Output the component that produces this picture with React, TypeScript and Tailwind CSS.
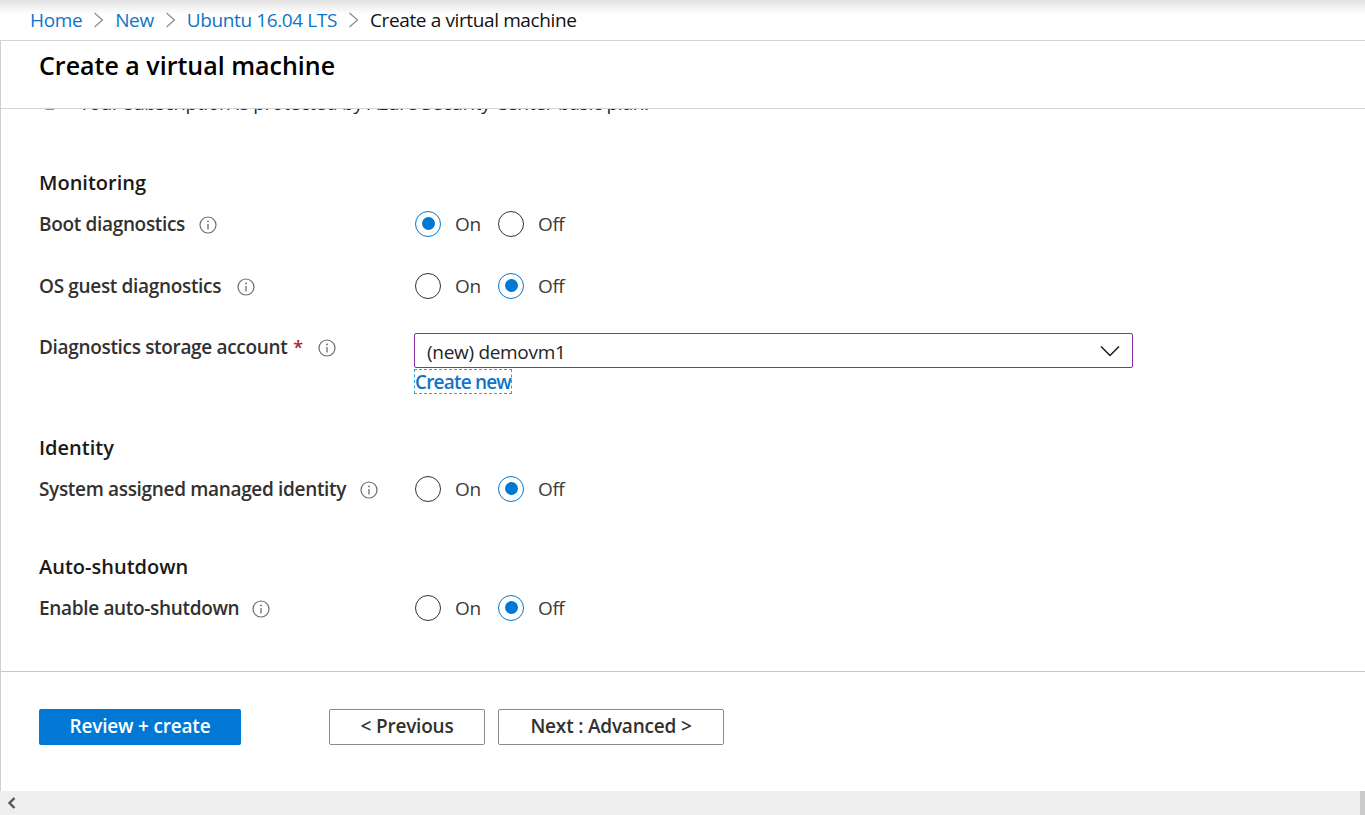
import React from 'react';

const font = "font-['Open_Sans',sans-serif]";

const Chevron = () => (
  <svg width="13" height="18" viewBox="0 0 13 18" fill="none" className="mx-[10px] shrink-0">
    <path d="M2.5 2l8 7-8 7" stroke="#8a8a8a" strokeWidth="1.2" />
  </svg>
);

const Info = () => (
  <svg width="18" height="18" viewBox="0 0 18 18" fill="none" className="shrink-0">
    <circle cx="9" cy="9" r="8" stroke="#6b6b6b" strokeWidth="1.2" />
    <path d="M9 8v5.5" stroke="#6b6b6b" strokeWidth="1.3" />
    <circle cx="9" cy="5.4" r="0.9" fill="#6b6b6b" />
  </svg>
);

const Radio = ({ checked, label }: { checked: boolean; label: string }) => (
  <div className="flex items-center">
    <div
      className={`mb-[2px] flex h-[26px] w-[26px] items-center justify-center rounded-full border ${
        checked ? 'border-[#0078d4]' : 'border-[#333333]'
      }`}
    >
      {checked && <div className="h-[13px] w-[13px] rounded-full bg-[#0078d4]" />}
    </div>
    <span className="ml-[14px] text-[19px] tracking-[-0.4px] text-[#3b3b3b]">{label}</span>
  </div>
);

const Toggle = ({ on }: { on: boolean }) => (
  <div className="flex gap-[17px]">
    <div className="w-[66px]">
      <Radio checked={on} label="On" />
    </div>
    <Radio checked={!on} label="Off" />
  </div>
);

const Row = ({ label, infoGap, on }: { label: string; infoGap: string; on: boolean }) => (
  <div className="flex h-[27px] items-center">
    <div className="flex w-[376px] items-center">
      <span className={`text-[19px] font-semibold tracking-[-0.33px] text-[#323130] ${infoGap}`}>{label}</span>
      <Info />
    </div>
    <Toggle on={on} />
  </div>
);

const Heading = ({ children }: { children: string }) => (
  <h2 className="text-[20px] leading-[26px] font-semibold text-[#1a1a1a]">{children}</h2>
);

export default function App() {
  return (
    <div className={`flex h-[815px] w-[1365px] flex-col overflow-hidden bg-white ${font}`}>
      {/* breadcrumb */}
      <div className="flex h-[41px] shrink-0 items-center border-b border-[#d4d4d4] bg-gradient-to-b from-[#e2e2e2] via-white via-35% to-white pl-[30px] text-[19px] tracking-[-0.38px]">
        <a className="text-[#0f74c8]">Home</a>
        <Chevron />
        <a className="text-[#0f74c8]">New</a>
        <Chevron />
        <a className="text-[#0f74c8]">Ubuntu 16.04 LTS</a>
        <Chevron />
        <span className="text-[#111111]">Create a virtual machine</span>
      </div>

      <div className="flex min-h-0 flex-1 flex-col border-l border-[#cfcfcf]">
        {/* blade title */}
        <div className="flex h-[68px] shrink-0 items-start border-b border-[#d4d4d4] pt-[6px] pl-[38px]">
          <h1 className="text-[25px] leading-[36px] font-semibold text-black">Create a virtual machine</h1>
        </div>

        {/* scrolled content, top row is cut by the title */}
        <div className="h-[563px] shrink-0 overflow-hidden border-b border-[#c8c8c8] pl-[38px]">
          <div className="-mt-[18px] flex h-[24px] items-center">
            <div className="ml-[6px] h-[14px] w-[10px] rounded-b-[2px] bg-[#6bb700]" />
            <span className="ml-[24px] text-[19px] tracking-[-0.25px] whitespace-nowrap text-[#252525]">
              Your subscription is protected by Azure Security Center basic plan.
            </span>
          </div>

          <div className="mt-[55px]">
            <Heading>Monitoring</Heading>
          </div>
          <div className="mt-[15px]">
            <Row label="Boot diagnostics" infoGap="mr-[14px]" on />
          </div>
          <div className="mt-[35px]">
            <Row label="OS guest diagnostics" infoGap="mr-[16px]" on={false} />
          </div>
          <div className="mt-[33px] flex">
            <div className="flex h-[27px] w-[375px] items-center pt-[2px]">
              <span className="text-[19px] font-semibold tracking-[-0.33px] text-[#323130]">Diagnostics storage account</span>
              <span className="ml-[6px] text-[18px] font-semibold text-[#a4262c]">*</span>
              <span className="ml-[15px]">
                <Info />
              </span>
            </div>
            <div className="w-[719px]">
              <div className="flex h-[35px] items-center justify-between rounded-[2px] border border-[#8a2da5] pr-[12px] pl-[12px]">
                <span className="pt-[3px] text-[19px] tracking-[-0.3px] text-[#252525]">(new) demovm1</span>
                <svg width="20" height="12" viewBox="0 0 20 12" fill="none">
                  <path d="M1 1.5l9 9 9-9" stroke="#1a1a1a" strokeWidth="1.5" />
                </svg>
              </div>
              <a className="mt-[1px] flex h-[25px] w-[98px] items-center justify-center border border-dashed border-[#2aa8dc] pt-[2px] text-[19px] font-semibold tracking-[-0.8px] whitespace-nowrap text-[#0f74c8]">
                Create new
              </a>
            </div>
          </div>

          <div className="mt-[41px]">
            <Heading>Identity</Heading>
          </div>
          <div className="mt-[15px]">
            <Row label="System assigned managed identity" infoGap="mr-[14px]" on={false} />
          </div>

          <div className="mt-[51px]">
            <Heading>Auto-shutdown</Heading>
          </div>
          <div className="mt-[15px]">
            <Row label="Enable auto-shutdown" infoGap="mr-[13px]" on={false} />
          </div>
        </div>

        {/* footer */}
        <div className="flex flex-1 items-start pt-[37px] pl-[38px]">
          <button className="h-[36px] w-[202px] rounded-[2px] bg-[#0078d4] pb-[2px] text-[19px] font-semibold tracking-[-0.2px] text-white">
            Review + create
          </button>
          <button className="ml-[88px] h-[36px] w-[156px] rounded-[2px] border border-[#8a8a8a] bg-white pb-[2px] text-[19px] font-semibold tracking-[-0.2px] text-[#323130]">
            &lt; Previous
          </button>
          <button className="ml-[13px] h-[36px] w-[226px] rounded-[2px] border border-[#8a8a8a] bg-white pb-[2px] text-[19px] font-semibold tracking-[-0.2px] text-[#323130]">
            Next : Advanced &gt;
          </button>
        </div>
      </div>

      {/* horizontal scrollbar */}
      <div className="flex h-[24px] shrink-0 items-center justify-between bg-[#eeeeee]">
        <svg width="12" height="14" viewBox="0 0 12 14" fill="none" className="ml-[6px]">
          <path d="M8.5 2L3.5 7l5 5" stroke="#555555" strokeWidth="2.4" />
        </svg>
        <div className="h-full w-[5px] bg-[#cbcbcb]" />
      </div>
    </div>
  );
}
